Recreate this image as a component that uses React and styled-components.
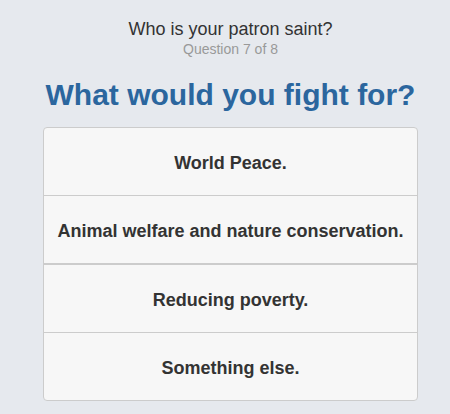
import React from "react";
import styled, { createGlobalStyle } from "styled-components";

const Global = createGlobalStyle`
  html, body { margin: 0; padding: 0; background: #e6e9ee; }
  body { font-family: "Liberation Sans", Arial, sans-serif; color: #333; }
`;

const Page = styled.div`
  padding: 19px 32px 0 43px;
  display: flex;
  flex-direction: column;
  align-items: stretch;
`;

const Header = styled.header`
  text-align: center;
`;

const QuizTitle = styled.div`
  font-size: 18px;
  line-height: 20px;
  color: #333;
`;

const Progress = styled.div`
  margin-top: 2px;
  font-size: 14px;
  line-height: 17px;
  color: #999;
`;

const Question = styled.h1`
  margin: 19px 0 14px;
  font-size: 30px;
  line-height: 36px;
  font-weight: bold;
  color: #2b669e;
  text-align: center;
  white-space: nowrap;
`;

const List = styled.div`
  display: flex;
  flex-direction: column;
  border: 1px solid #ccc;
  border-radius: 4px;
  background: #f7f7f7;
  overflow: hidden;
`;

const Answer = styled.button`
  all: unset;
  box-sizing: border-box;
  height: ${(p) => p.$h || 68}px;
  padding-top: 3px;
  display: flex;
  align-items: center;
  justify-content: center;
  font-family: "Liberation Sans", Arial, sans-serif;
  font-size: 18px;
  font-weight: bold;
  color: #333;
  cursor: pointer;
  border-top: ${(p) => (p.$first ? "none" : `${p.$thick ? 2 : 1}px solid #ccc`)};
`;

const answers = [
  { t: "World Peace.", h: 67 },
  { t: "Animal welfare and nature conservation.", h: 68 },
  { t: "Reducing poverty.", h: 69, thick: true },
  { t: "Something else.", h: 68 },
];

export default function App() {
  return (
    <>
      <Global />
      <Page>
        <Header>
          <QuizTitle>Who is your patron saint?</QuizTitle>
          <Progress>Question 7 of 8</Progress>
        </Header>
        <Question>What would you fight for?</Question>
        <List>
          {answers.map((a, i) => (
            <Answer key={a.t} $first={i === 0} $thick={a.thick} $h={a.h}>
              {a.t}
            </Answer>
          ))}
        </List>
      </Page>
    </>
  );
}
